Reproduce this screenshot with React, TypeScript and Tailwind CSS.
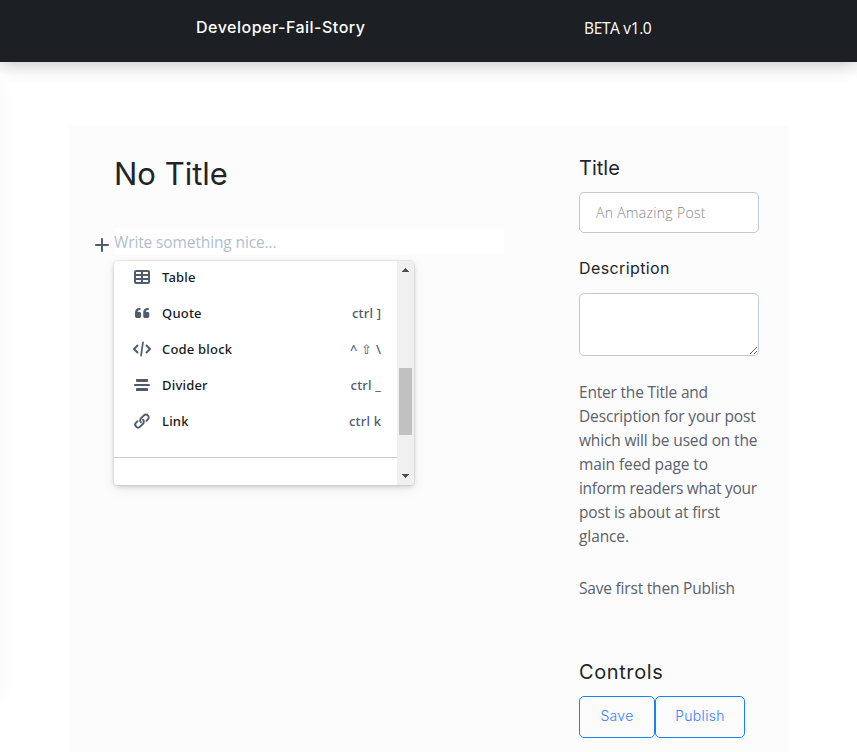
import type { ReactNode } from "react";

const body = "font-['Open_Sans','Noto_Sans',sans-serif]";
const display = "font-['Inter',sans-serif]";

function Icon({ children }: { children: ReactNode }) {
  return (
    <svg width="24" height="24" viewBox="0 0 24 24" fill="#4e5c6e" className="mr-2 shrink-0">
      {children}
    </svg>
  );
}

function MenuItem({ icon, label, keys }: { icon: ReactNode; label: string; keys?: string }) {
  return (
    <div className="flex h-9 items-center px-4 font-['Noto_Sans','Open_Sans',sans-serif] text-[13px] font-medium">
      <Icon>{icon}</Icon>
      <span className="grow pt-[2px] tracking-[0.2px] whitespace-nowrap text-[#181a1b]">{label}</span>
      {keys && <span className="-mr-[0.2px] pt-[2px] tracking-[0.2px] whitespace-pre text-[#4e5c6e]">{keys}</span>}
    </div>
  );
}

const tableIcon = (
  <path fillRule="evenodd" d="M6 5h12a2 2 0 0 1 2 2v10a2 2 0 0 1-2 2H6a2 2 0 0 1-2-2V7a2 2 0 0 1 2-2zM6 7v2h5V7zM13 7v2h5V7zM6 11v2h5v-2zM13 11v2h5v-2zM6 15v2h5v-2zM13 15v2h5v-2z" />
);

const quoteIcon = (
  <path d="M9.300 7c.9 0 1.400.3 1.400.9 0 .7-.5.9-1.300 1-1.300.2-1.900.9-2 1.900h1.400c1.500 0 2.300.8 2.300 2.100v2c0 1.400-.8 2.100-2.200 2.100H7.200c-1.500 0-2.200-.9-2.200-2.300V12c0-3.200 1.600-5 4.300-5zM17.500 7c.9 0 1.400.3 1.400.9 0 .7-.5.9-1.300 1-1.300.2-1.900.9-2 1.900H17c1.500 0 2.300.8 2.300 2.100v2c0 1.400-.8 2.100-2.200 2.100h-1.700c-1.500 0-2.200-.9-2.200-2.300V12c0-3.200 1.600-5 4.300-5z" />
);

const codeIcon = (
  <g fill="none" stroke="#4e5c6e" strokeWidth="2" strokeLinecap="round" strokeLinejoin="round">
    <path d="M7.500 8.500 4 12l3.500 3.500M16.500 8.500 20 12l-3.500 3.500" />
    <path strokeWidth="1.700" d="M13 5.300l-2 13.400" />
  </g>
);

const dividerIcon = (
  <path d="M6 6.500a.5.500 0 0 1 .5-.5h11a.5.500 0 0 1 .5.500V8a1 1 0 0 1-1 1H7a1 1 0 0 1-1-1zM5 11h14a1 1 0 0 1 0 2H5a1 1 0 0 1 0-2zM7 15h10a1 1 0 0 1 1 1v1.500a.5.500 0 0 1-.5.500h-11a.5.500 0 0 1-.5-.5V16a1 1 0 0 1 1-1z" />
);

const linkIcon = (
  <g fill="none" stroke="#4e5c6e" strokeWidth="1.900" strokeLinecap="round" strokeLinejoin="round">
    <path d="M11 13.200a2.800 2.800 0 0 1 0-4l2.900-2.900a2.800 2.800 0 0 1 4 4l-1.500 1.500M13 10.800a2.800 2.800 0 0 1 0 4l-2.900 2.900a2.800 2.800 0 0 1-4-4l1.500-1.500" />
  </g>
);

function BlockMenu() {
  return (
    <div className="absolute top-[33px] left-0 flex h-[224px] w-[300px] overflow-hidden rounded-[4px] bg-white shadow-[0_0_0_1px_rgba(0,0,0,0.05),0_2px_5px_rgba(0,0,0,0.16),0_4px_16px_rgba(0,0,0,0.05)]">
      <div className="flex grow flex-col">
        <div className="-mt-[2px]">
          <MenuItem icon={tableIcon} label="Table" />
          <MenuItem icon={quoteIcon} label="Quote" keys="ctrl ]" />
          <MenuItem icon={codeIcon} label="Code block" keys="^ ⇧ \" />
          <MenuItem icon={dividerIcon} label="Divider" keys="ctrl _" />
          <MenuItem icon={linkIcon} label="Link" keys="ctrl k" />
        </div>
        <div className="mt-[18px] h-px bg-[#c5ccd3]" />
      </div>
      <div className="flex w-[17px] shrink-0 flex-col items-center justify-between bg-[#f0f0f0] py-[7px]">
        <svg width="7" height="4" viewBox="0 0 7 4" fill="#505050"><path d="M3 0h1v1h1v1h1v1h1v1H0V3h1V2h1V1h1z" /></svg>
        <div className="mt-[56px] h-[67px] w-[13px] bg-[#c1c1c1]" />
        <svg width="7" height="4" viewBox="0 0 7 4" fill="#505050"><path d="M3 4h1V3h1V2h1V1h1V0H0v1h1v1h1v1h1z" /></svg>
      </div>
    </div>
  );
}

const summary = [
  ["Enter the Title and", "tracking-[-0.2px]"],
  ["Description for your post", "tracking-[-0.15px]"],
  ["which will be used on the", "tracking-[-0.15px]"],
  ["main feed page to", "tracking-[-0.1px]"],
  ["inform readers what your", "tracking-[-0.3px]"],
  ["post is about at first", "tracking-[-0.15px]"],
  ["glance.", "tracking-[-0.1px]"],
];

export default function App() {
  return (
    <div className={`relative flex h-[752px] w-full flex-col overflow-hidden bg-white ${body}`}>
      <header className="relative z-10 flex h-[62px] shrink-0 bg-[#1c1f23] text-white shadow-[0_0_20px_rgba(0,0,0,0.3)]">
        <span className={`ml-[196px] w-[388px] pt-[15px] text-[16px] leading-6 font-medium tracking-[0.5px] whitespace-nowrap ${display}`}>Developer-Fail-Story</span>
        <span className="pt-4 text-[15.5px] leading-6 tracking-[-0.35px] whitespace-nowrap">BETA v1.0</span>
      </header>
      <div className="absolute top-[82px] -left-[12px] h-[620px] w-[10px] shadow-[0_0_20px_rgba(0,0,0,0.05)]" />

      <main className="mt-16 ml-[69px] flex h-[626px] w-[720px] bg-[#fcfcfc]">
        <section className="ml-[45px] w-[390px]">
          <h1 className={`mt-[29px] h-[38px] text-[31px] leading-[38px] whitespace-nowrap text-[#212529] ${display}`}>No Title</h1>
          <div className="relative mt-[35px] h-[27px] bg-white">
            <svg className="absolute top-[10px] -left-[19px]" width="14" height="14" viewBox="0 0 14 14" fill="none" stroke="#4e5c6e" strokeWidth="2" strokeLinecap="round"><path d="M7 1v12M1 7h12" /></svg>
            <p className="pt-[2px] text-[15.5px] leading-6 tracking-[-0.12px] whitespace-nowrap text-[#b1becc]">Write something nice...</p>
            <BlockMenu />
          </div>
        </section>

        <aside className="ml-[75px] w-[180px]">
          <h2 className={`mt-[30px] h-6 text-[20px] leading-6 text-[#212529] ${display}`}>Title</h2>
          <input className="mt-3 block h-[41px] w-[180px] rounded-[5px] border border-[#becad9] bg-white px-4 text-[14px] font-light tracking-[0.33px] placeholder:text-[#868686]" placeholder="An Amazing Post" />
          <h3 className={`mt-[25px] h-5 text-[16px] leading-5 tracking-[0.4px] text-[#212529] ${display}`}>Description</h3>
          <textarea className="mt-[15px] block h-[63px] w-[180px] rounded-[5px] border border-[#becad9] bg-white" />
          <div className="mt-6 text-[15.5px] leading-6 text-[#5a6169]">
            {summary.map(([line, spacing]) => (
              <p key={line} className={`whitespace-nowrap ${spacing}`}>{line}</p>
            ))}
            <p className="mt-7 whitespace-nowrap tracking-[-0.2px]">Save first then Publish</p>
          </div>
          <h2 className={`mt-[60px] h-6 text-[20px] leading-6 tracking-[0.6px] text-[#212529] ${display}`}>Controls</h2>
          <div className={`mt-3 flex text-[14px] font-light tracking-[0.3px] text-[#3a80ff] ${display}`}>
            <button className="h-[42px] w-[76px] rounded-[5px] border border-[#1a82f7] pb-[3px]">Save</button>
            <button className="h-[42px] w-[90px] rounded-[5px] border border-[#1a82f7] pb-[3px]">Publish</button>
          </div>
        </aside>
      </main>
    </div>
  );
}
